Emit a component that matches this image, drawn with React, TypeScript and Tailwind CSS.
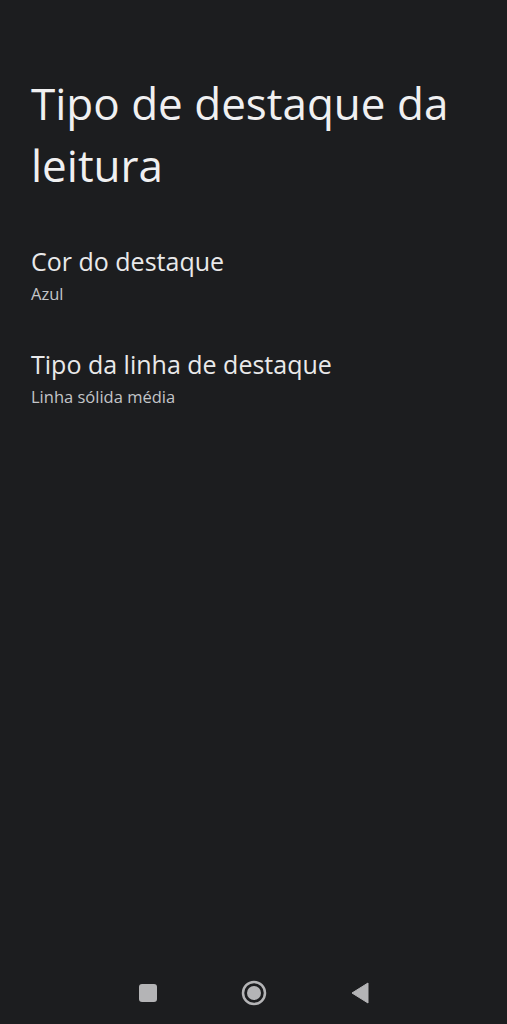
import React from "react";

function SettingRow({ title, value }: { title: string; value: string }) {
  return (
    <div className="flex flex-col">
      <span className="text-[25px] leading-[32px] text-[#e9e9ea]">{title}</span>
      <span className="mt-[6px] text-[16.5px] leading-[22px] text-[#c3c5c8]">{value}</span>
    </div>
  );
}

export default function App() {
  return (
    <div className="flex h-[1024px] w-full flex-col bg-[#1c1d1f] font-['Open_Sans',Roboto,sans-serif]">
      <h1 className="px-[31px] pt-[72px] text-[44px] leading-[62px] font-normal text-[#f0f0f1]">
        Tipo de destaque da leitura
      </h1>
      <div className="mt-[49px] flex flex-col gap-[43px] px-[31px]">
        <SettingRow title="Cor do destaque" value="Azul" />
        <SettingRow title="Tipo da linha de destaque" value="Linha sólida média" />
      </div>
      <div className="flex-1" />
      <nav className="flex h-[60px] items-center justify-center gap-[83px] pb-[2px]">
        <svg width="20" height="20" viewBox="0 0 20 20">
          <rect x="1" y="1" width="18" height="18" rx="3" fill="#b4b4b6" />
        </svg>
        <svg width="26" height="26" viewBox="0 0 26 26">
          <circle cx="13" cy="13" r="11" fill="none" stroke="#b4b4b6" strokeWidth="2.5" />
          <circle cx="13" cy="13" r="7" fill="#b4b4b6" />
        </svg>
        <svg width="20" height="22" viewBox="0 0 20 22">
          <path d="M18 1 L2 11 L18 21 Z" fill="#b4b4b6" strokeLinejoin="round" stroke="#b4b4b6" strokeWidth="1" />
        </svg>
      </nav>
    </div>
  );
}
